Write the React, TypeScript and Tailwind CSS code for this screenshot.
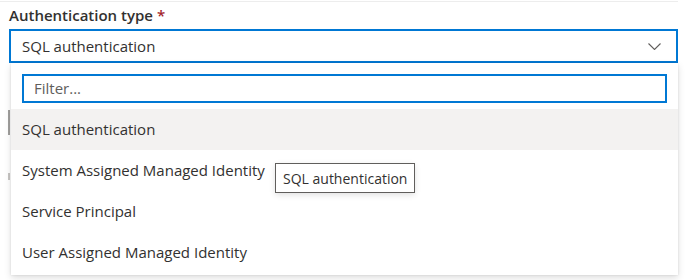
import React from "react";

const options = [
  "SQL authentication",
  "System Assigned Managed Identity",
  "Service Principal",
  "User Assigned Managed Identity",
];

function Chevron() {
  return (
    <svg width="13" height="7" viewBox="0 0 13 7" fill="none">
      <path d="M0.5 0.5l6 6 6-6" stroke="#605e5c" strokeWidth="1.1" />
    </svg>
  );
}

export default function App() {
  const selected = 0;

  return (
    <div className="relative w-[692px] h-[280px] overflow-hidden bg-white font-['Open_Sans',sans-serif] text-[#323130]">
      {/* faint edge of the section above */}
      <div className="h-[2px] w-[678px] border-b border-[#ededed]" />

      {/* form field behind the open list */}
      <div className="pl-[9px] pr-[14px]">
        <div className="h-[27px] pt-[2px] text-[15px] font-semibold leading-[22px]">
          Authentication type <span className="text-[#a4262c]">*</span>
        </div>
        <div className="flex h-[34px] items-center justify-between border-2 border-[#0078d4] pl-[11px] pr-[15px] text-[15px]">
          <span>SQL authentication</span>
          <Chevron />
        </div>
        {/* underlying inputs peeking out on the left */}
        <div className="mt-[47px] ml-[-1px] h-[25px] w-[2px] bg-[#a19f9d]" />
        <div className="mt-[38px] ml-[-1px] h-[7px] w-[2px] bg-[#c8c6c4]" />
      </div>

      {/* open dropdown callout */}
      <div className="absolute left-[11px] top-[63px] w-[667px] bg-white pt-[11px] pb-[2px] shadow-[0_3px_7px_rgba(0,0,0,0.13),0_0_2px_rgba(0,0,0,0.11)]">
        <div className="mx-[11px] flex h-[29px] items-center border-2 border-[#0078d4] px-[10px] text-[15px] text-[#605e5c]">
          Filter...
        </div>
        <ul className="mt-[6px]">
          {options.map((o, i) => (
            <li
              key={o}
              className={
                "flex h-[41px] items-center pl-[11px] text-[15px] " +
                (i === selected ? "bg-[#f3f2f1]" : "")
              }
            >
              {o}
            </li>
          ))}
        </ul>
      </div>

      {/* tooltip */}
      <div className="absolute left-[275px] top-[163px] flex h-[30px] items-center border border-[#605e5c] bg-white px-[7px] text-[14px] shadow-[0_2px_6px_rgba(0,0,0,0.12)]">
        SQL authentication
      </div>
    </div>
  );
}
